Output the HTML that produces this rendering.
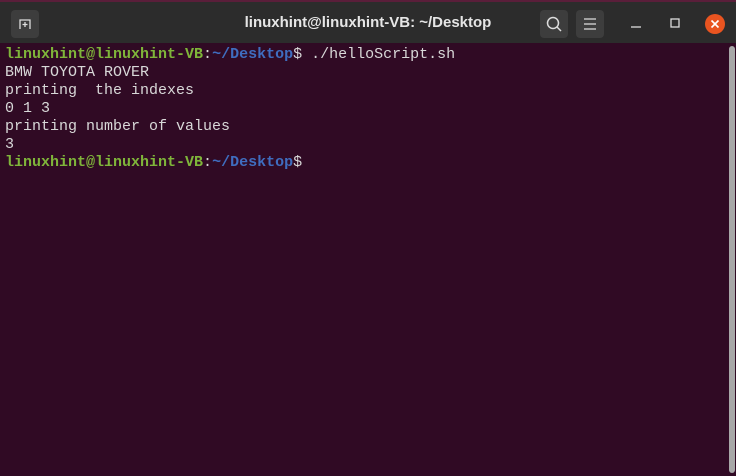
<!DOCTYPE html>
<html><head><style>
html,body{margin:0;padding:0;width:736px;height:476px;overflow:hidden;background:#300a24}
.tb{position:absolute;left:0;top:0;width:736px;height:43px;background:#2c2c2c;border-top:2px solid #5a1e3a;box-sizing:border-box}
.title{position:absolute;left:0;width:736px;top:12px;text-align:center;color:#e6e6e6;font:bold 15px "Liberation Sans",sans-serif}
.btn{position:absolute;top:8px;width:28px;height:28px;background:#3d3d3d;border-radius:4px}
.term{position:absolute;left:5px;top:45.5px;font:15px/18px "Liberation Mono",monospace;color:#d8d8d8;white-space:pre}
.g{color:#7fb53a;font-weight:bold}.b{color:#3f6dbf;font-weight:bold}
.sb{position:absolute;left:729px;top:46px;width:6px;height:427px;background:#a8a8a8;border-radius:3px}
</style></head><body>
<div class="tb">
<div class="btn" style="left:11px;top:8px"><svg width="28" height="28"><path d="M9 19V10h10v9M14 12v5M11.5 14.5h5" stroke="#ddd" fill="none" stroke-width="1.3"/></svg></div>
<div class="title">linuxhint@linuxhint-VB: ~/Desktop</div>
<div class="btn" style="left:540px"><svg width="28" height="28"><circle cx="13" cy="13" r="5.5" stroke="#ddd" fill="none" stroke-width="1.5"/><path d="M17 17l4 4" stroke="#ddd" stroke-width="1.5"/></svg></div>
<div class="btn" style="left:576px"><svg width="28" height="28"><path d="M8 9h12M8 14h12M8 19h12" stroke="#ddd" stroke-width="1.3"/></svg></div>
<svg style="position:absolute;left:630px;top:15px" width="14" height="14"><path d="M1 10h10" stroke="#ddd" stroke-width="1.3"/></svg>
<svg style="position:absolute;left:669px;top:15px" width="14" height="14"><rect x="2" y="2" width="8" height="8" stroke="#ddd" fill="none" stroke-width="1.3"/></svg>
<svg style="position:absolute;left:704px;top:11px" width="22" height="22"><circle cx="11" cy="11" r="10" fill="#e95420"/><path d="M7.5 7.5l7 7M14.5 7.5l-7 7" stroke="#fff" stroke-width="1.6"/></svg>
</div>
<div class="term"><span class="g">linuxhint@linuxhint-VB</span>:<span class="b">~/Desktop</span>$ ./helloScript.sh
BMW TOYOTA ROVER
printing  the indexes
0 1 3
printing number of values
3
<span class="g">linuxhint@linuxhint-VB</span>:<span class="b">~/Desktop</span>$</div>
<div class="sb"></div>
</body></html>
